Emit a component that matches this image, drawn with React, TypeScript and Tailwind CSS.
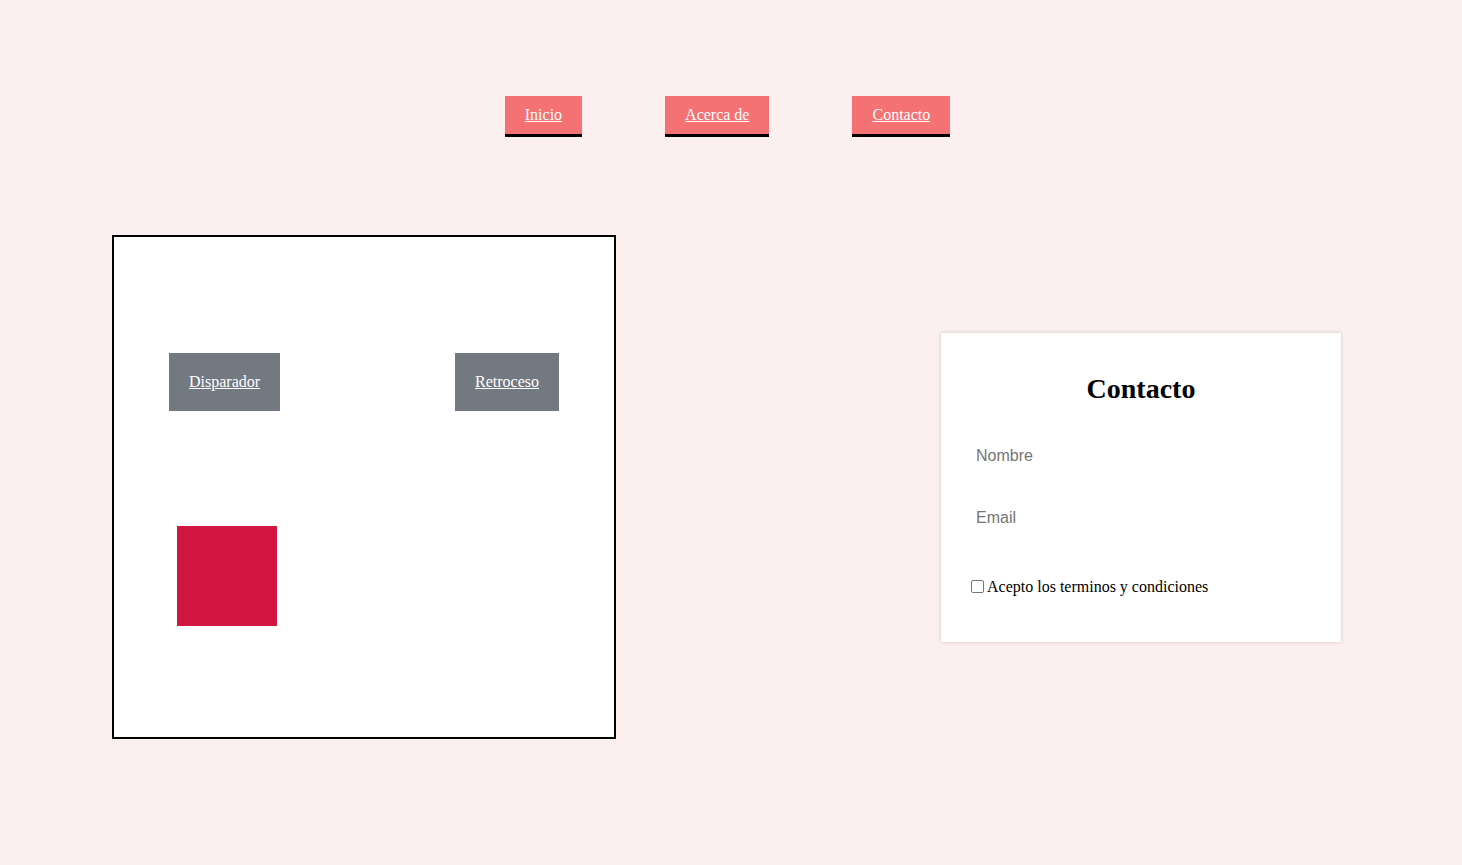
import React, { useState } from "react";

const navItems = ["Inicio", "Acerca de", "Contacto"];

const App: React.FC = () => {
  const [nombre, setNombre] = useState("");
  const [email, setEmail] = useState("");
  const [acepto, setAcepto] = useState(false);

  return (
    <div className="min-h-[865px] bg-[#fcefef] font-['Liberation_Serif',serif] text-black">
      <nav className="flex justify-center gap-[83px] pt-[96px] pr-[7px]">
        {navItems.map((item) => (
          <a
            key={item}
            href="#"
            className="bg-[#f47174] px-5 py-[10px] text-base leading-[18px] text-white underline border-b-[3px] border-black"
          >
            {item}
          </a>
        ))}
      </nav>

      <main className="flex items-center pl-[112px] pt-[98px]">
        <div className="w-[504px] h-[504px] border-2 border-black bg-white px-[55px] pt-[116px]">
          <div className="flex justify-between">
            <a href="#" className="bg-[#737980] px-5 py-5 text-base leading-[18px] text-white underline">
              Disparador
            </a>
            <a href="#" className="bg-[#737980] px-5 py-5 text-base leading-[18px] text-white underline">
              Retroceso
            </a>
          </div>
          <div className="ml-[8px] mt-[115px] w-[100px] h-[100px] bg-[#d01541]" />
        </div>

        <form className="ml-[325px] w-[400px] bg-white pt-[40px] pb-[46px] px-[25px] shadow-[0_0_4px_rgba(0,0,0,0.18)]">
          <h1 className="text-center text-[28px] leading-8 font-bold">Contacto</h1>
          <input
            type="text"
            placeholder="Nombre"
            value={nombre}
            onChange={(e) => setNombre(e.target.value)}
            className="mt-[32px] block w-full h-[38px] px-[10px] text-[16px] font-['Liberation_Sans',Arial,sans-serif] placeholder:text-[#757575] outline-none"
          />
          <input
            type="email"
            placeholder="Email"
            value={email}
            onChange={(e) => setEmail(e.target.value)}
            className="mt-[24px] block w-full h-[38px] px-[10px] text-[16px] font-['Liberation_Sans',Arial,sans-serif] placeholder:text-[#757575] outline-none"
          />
          <label className="mt-[41px] flex items-center text-base leading-[18px]">
            <input
              type="checkbox"
              checked={acepto}
              onChange={(e) => setAcepto(e.target.checked)}
              className="ml-[5px] mr-[3px] w-[13px] h-[13px] appearance-none border border-[#767676] rounded-[2px] bg-white checked:bg-[#0075ff]"
            />
            Acepto los terminos y condiciones
          </label>
        </form>
      </main>
    </div>
  );
};

export default App;
